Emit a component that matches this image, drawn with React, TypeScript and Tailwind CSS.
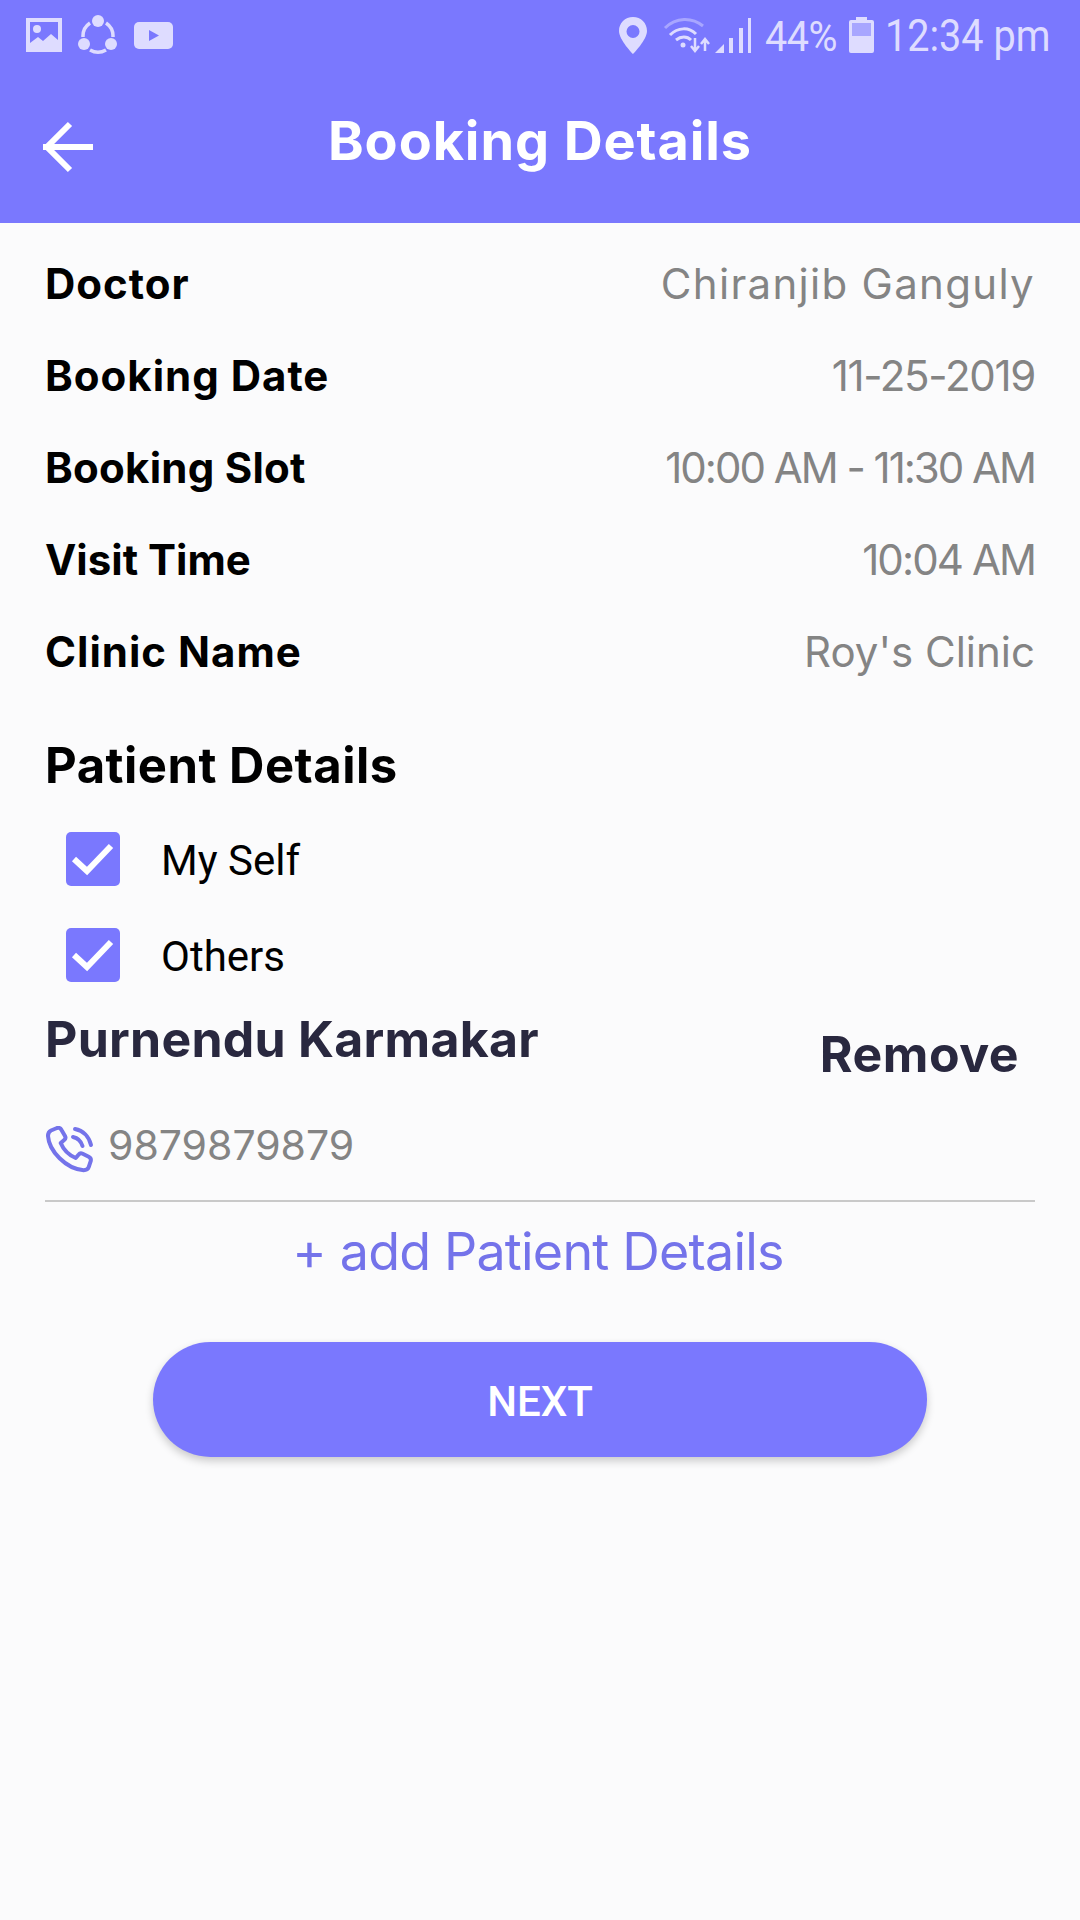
const rows = [
  { label: "Doctor", labelCls: "tracking-[1px]", value: "Chiranjib Ganguly", valueCls: "tracking-[1.3px]" },
  { label: "Booking Date", labelCls: "tracking-[1px]", value: "11-25-2019", valueCls: "tracking-[-1.3px]" },
  { label: "Booking Slot", labelCls: "tracking-[0.25px]", value: "10:00 AM - 11:30 AM", valueCls: "tracking-[-2px]" },
  { label: "Visit Time", labelCls: "tracking-[0px]", value: "10:04 AM", valueCls: "tracking-[-1.9px]" },
  { label: "Clinic Name", labelCls: "tracking-[1px]", value: "Roy's Clinic", valueCls: "tracking-[0px]" },
];

function StatusLeft() {
  return (
    <div className="flex items-center gap-[16px]">
      <svg width="36" height="34" viewBox="0 0 36 34" fill="none">
        <path fillRule="evenodd" clipRule="evenodd" d="M0 0h36v34H0z M4 4v21l8-6 5 4 8-7 7 6V4z" fill="#dedcff" />
        <circle cx="11" cy="11" r="4" fill="#dedcff" />
      </svg>
      <svg width="40" height="40" viewBox="0 0 40 40" fill="none">
        <path d="M12 8A16 16 0 0 0 5 22M12 35a16 16 0 0 0 16 0M35 22a16 16 0 0 0-7-14" stroke="#dedcff" strokeWidth="3.5" />
        <circle cx="20" cy="6" r="6" fill="#dedcff" />
        <circle cx="6" cy="29" r="6" fill="#dedcff" />
        <circle cx="33" cy="29" r="6" fill="#dedcff" />
      </svg>
      <svg width="39" height="27" viewBox="0 0 39 27" fill="none">
        <rect width="39" height="27" rx="5" fill="#dedcff" />
        <path d="M15 8v11l10-5.500z" fill="#7a78fe" />
      </svg>
    </div>
  );
}

function StatusRight() {
  return (
    <div className="flex items-center text-[#dedcff]">
      <svg width="28" height="37" viewBox="0 0 28 37" fill="none">
        <path fillRule="evenodd" clipRule="evenodd" d="M14 0C6 0 0 6 0 14c0 9 14 23 14 23s14-14 14-23C28 6 22 0 14 0zm0 8a6.500 6.500 0 1 1 0 13 6.500 6.500 0 0 1 0-13z" fill="#dedcff" />
      </svg>
      <svg className="ml-[16px]" width="48" height="36" viewBox="0 0 48 36" fill="none">
        <path d="M2 11C13 0 29 0 40 9" stroke="#a8a6ff" strokeWidth="3" />
        <path d="M7 18c8-8 19-8 26-1M13 23c5-4 11-4 15 0" stroke="#dedcff" strokeWidth="3" />
        <circle cx="20" cy="28" r="2.500" fill="#dedcff" />
        <path d="M32 21v12M28 29l4 5 4-5M42 34V22M38 27l4-5 4 5" stroke="#dedcff" strokeWidth="2.500" />
      </svg>
      <svg className="ml-[4px]" width="36" height="37" viewBox="0 0 36 37" fill="none">
        <path d="M0 36l9-9v9z" fill="#dedcff" />
        <path d="M14 36V21h4v15zM24 36V11h4v25zM33 36V1h3v35z" fill="#dedcff" />
      </svg>
      <span className="ml-[14px] mt-[2px] w-[72px] origin-left whitespace-nowrap text-[43px] leading-none tracking-[-0.5px] [font-family:Roboto,sans-serif] [transform:scaleX(0.92)]">44%</span>
      <svg className="ml-[12px]" width="25" height="36" viewBox="0 0 25 36" fill="none">
        <path d="M7 0h11v3h5a2 2 0 0 1 2 2v29a2 2 0 0 1-2 2H2a2 2 0 0 1-2-2V5a2 2 0 0 1 2-2h5z" fill="#dedcff" />
        <rect x="3" y="6" width="19" height="13" fill="#a8a6ff" />
      </svg>
      <span className="ml-[11px] mt-[2px] w-[162px] origin-left whitespace-nowrap text-[44px] leading-none [font-family:Roboto,sans-serif] [transform:scaleX(0.9)]">12:34 pm</span>
    </div>
  );
}

function CheckRow({ label }: { label: string }) {
  return (
    <div className="flex h-[96px] items-center pl-[21px]">
      <div className="flex h-[54px] w-[54px] items-center justify-center rounded-[5px] bg-[#7a78fe]">
        <svg width="44" height="34" viewBox="0 0 44 34" fill="none">
          <path d="M3 17l13 12L40 4" stroke="#fff" strokeWidth="6" />
        </svg>
      </div>
      <span className="ml-[41px] pt-[2px] text-[42px] text-black [font-family:Roboto,sans-serif]">{label}</span>
    </div>
  );
}

export default function App() {
  return (
    <div className="flex h-[1920px] w-[1080px] flex-col overflow-hidden bg-[#fbfbfc] [font-family:Inter,sans-serif]">
      {/* Header */}
      <header className="h-[223px] shrink-0 bg-[#7a78fe]">
        <div className="flex h-[70px] items-center justify-between pl-[26px] pr-[33px]">
          <StatusLeft />
          <StatusRight />
        </div>
        <div className="relative flex h-[140px] items-center justify-center">
          <svg className="absolute left-[41px] top-[50px]" width="54" height="54" viewBox="0 0 54 54" fill="none">
            <path d="M2 27h50M29 4L6 27l23 23" stroke="#fff" strokeWidth="6" />
          </svg>
          <h1 className="text-[54px] font-bold tracking-[0.9px] text-white">Booking Details</h1>
        </div>
      </header>

      {/* Booking info */}
      <main className="flex flex-col px-[45px] pt-[14px]">
        {rows.map((r) => (
          <div key={r.label} className="flex h-[92px] items-center justify-between">
            <span className={`text-[42px] font-bold text-black ${r.labelCls}`}>{r.label}</span>
            <span className={`text-[42px] text-[#848484] ${r.valueCls}`}>{r.value}</span>
          </div>
        ))}

        <h2 className="mt-[34px] text-[49px] font-bold leading-[70px] tracking-[0.5px] text-black">Patient Details</h2>

        <div className="mt-[10px] flex flex-col">
          <CheckRow label="My Self" />
          <CheckRow label="Others" />
        </div>

        <div className="mt-[1px] flex items-start justify-between pr-[16px]">
          <span className="text-[50px] font-bold leading-[70px] tracking-[0.25px] text-[#29283f]">Purnendu Karmakar</span>
          <span className="mt-[15px] text-[50px] font-bold leading-[70px] tracking-[0.5px] text-[#29283f]">Remove</span>
        </div>

        <div className="mt-[22px] flex h-[70px] items-center">
          <svg className="ml-[1px] mt-[8px]" width="48" height="48" viewBox="0 0 48 48" fill="none">
            <path d="M5 4.500l6-2.500c2-.500 3.500 0 4.500 2l3.500 6c.8 1.500.5 3-.8 4l-3.500 3c2.500 6 8 12 15 15l3-3.500c1-1.300 2.500-1.500 4-.8l6 3c2 1 2.500 2.500 2 4.500l-2 6c-.7 2-2.500 3-5 3C20 43 3 25 2 10c0-2.500 1-4.500 3-5.500z" stroke="#7473ea" strokeWidth="4" strokeLinejoin="round" />
            <path d="M29 3c8 1.500 14 7.500 16 16M27 11c5 1 8 4 9.500 9" stroke="#7473ea" strokeWidth="4" strokeLinecap="round" />
          </svg>
          <span className="ml-[14px] text-[41px] text-[#848484]">9879879879</span>
        </div>

        <div className="mt-[19px] h-[2px] bg-[#c9c9c9]" />

        <button className="mt-[15px] h-[70px] pr-[4px] text-[52px] leading-[70px] tracking-[-0.8px] text-[#7473ea]">+ add Patient Details</button>

        <button className="mx-auto mt-[55px] flex h-[115px] w-[774px] items-center justify-center rounded-full bg-[#7a78fe] pt-[3px] text-[42px] font-medium text-white shadow-[0_4px_8px_rgba(0,0,0,0.2)] [font-family:Roboto,sans-serif]">
          NEXT
        </button>
      </main>
    </div>
  );
}
